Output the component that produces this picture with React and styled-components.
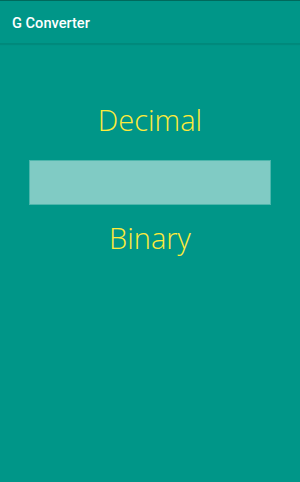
import React from 'react';
import styled, { createGlobalStyle } from 'styled-components';

const GlobalStyle = createGlobalStyle`
    html, body {
        margin:0;
        padding:0;
        background:#009688;
    }
`;

const Screen = styled.div`
    width:300px;
    height:482px;
    display:flex;
    flex-direction:column;
    background:#009688;
    border-top:1px solid #00695c;
    box-sizing:border-box;
`;

const Toolbar = styled.div`
    height:42px;
    display:flex;
    align-items:center;
    padding:0 12px;
    border-bottom:1px solid #00897b;
    box-shadow:0 1px 1px rgba(0, 0, 0, 0.08);
`;

const Title = styled.div`
    color:#ffffff;
    font-family:Roboto, "Liberation Sans", sans-serif;
    font-weight:500;
    font-size:14.6px;
    margin-top:1px;
`;

const Body = styled.div`
    display:flex;
    flex-direction:column;
    align-items:center;
    padding-top:57px;
`;

const Label = styled.div`
    color:#ffeb3b;
    font-family:"Open Sans", sans-serif;
    font-weight:300;
    font-size:29px;
    line-height:38px;
`;

const Input = styled.input`
    width:242px;
    height:45px;
    box-sizing:border-box;
    margin:21px 0 14px;
    background:#80cbc4;
    border:1px solid #4db6ac;
    outline:none;
    padding:0 8px;
    font-family:"Open Sans", sans-serif;
    font-size:18px;
    color:#004d40;
`;

function App(){
    return (
        <Screen>
            <GlobalStyle />
            <Toolbar>
                <Title>G Converter</Title>
            </Toolbar>
            <Body>
                <Label>Decimal</Label>
                <Input type="text" />
                <Label>Binary</Label>
            </Body>
        </Screen>
    )
}

export default App;
